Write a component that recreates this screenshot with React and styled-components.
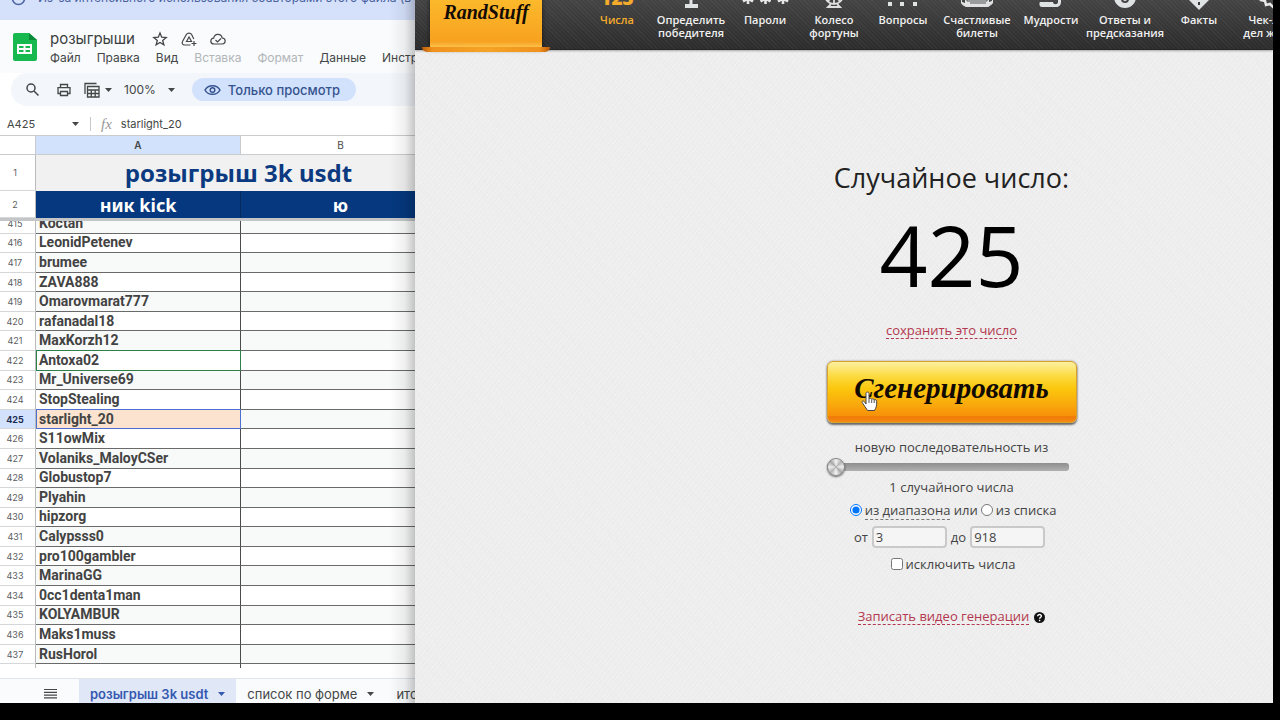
import { useState } from 'react';
import styled, { createGlobalStyle, css } from 'styled-components';

const GlobalStyle = createGlobalStyle`
  * {
    box-sizing: border-box;
  }
  body {
    margin: 0;
    background: #000;
  }
  button, input {
    font: inherit;
    color: inherit;
  }
`;

const Screen = styled.div`
  display: grid;
  grid-template-columns: 415px minmax(0, 1fr);
  height: 100vh;
  padding: 0 7px 17px 0;
  background: #000;
`;

/* ---------- spreadsheet ---------- */

const Sheet = styled.section`
  position: relative;
  display: flex;
  flex-direction: column;
  min-height: 0;
  overflow: hidden;
  background: #fff;
  color: #444746;
  font-family: Inter, 'Open Sans', sans-serif;
  font-size: 12px;
  &::after {
    content: '';
    position: absolute;
    inset: 0 0 0 auto;
    width: 26px;
    background: linear-gradient(to right, rgba(0, 0, 0, 0), rgba(0, 0, 0, 0.06) 60%, rgba(0, 0, 0, 0.22));
    pointer-events: none;
  }
`;

const Banner = styled.div`
  display: flex;
  flex: none;
  align-items: flex-end;
  gap: 12px;
  height: 20px;
  padding: 0 0 14px 11px;
  background: #d5e1fb;
  color: #4a62a0;
  font-size: 12px;
  line-height: 16px;
  white-space: nowrap;
  svg {
    flex: none;
  }
`;

const TitleBar = styled.header`
  display: flex;
  flex: none;
  gap: 13px;
  height: 53px;
  padding: 9px 0 0 13px;
  background: #f9fbfd;
  white-space: nowrap;
`;

const SheetLogo = styled.svg`
  flex: none;
  width: 24px;
  height: 28px;
  margin-top: 4px;
`;

const TitleRow = styled.div`
  display: flex;
  align-items: center;
  gap: 13px;
  height: 20px;
  svg {
    width: 16px;
    height: 16px;
  }
`;

const DocTitle = styled.h1`
  margin: 0 4px 0 0;
  color: #3c3f40;
  font-size: 15px;
  font-weight: 400;
  line-height: 20px;
`;

const MenuRow = styled.nav`
  display: flex;
  gap: 16px;
`;

const MenuButton = styled.button`
  padding: 0;
  border: 0;
  background: none;
  color: #444746;
  line-height: 18px;
  &:disabled {
    color: #b3b6b9;
  }
`;

const Toolbar = styled.div`
  display: flex;
  flex: none;
  align-items: center;
  height: 33px;
  margin-left: 11px;
  padding-left: 14px;
  border-radius: 17px 0 0 17px;
  background: #f3f6fb;
`;

const ToolButton = styled.button`
  display: flex;
  align-items: center;
  gap: ${(p) => p.$gap || 5}px;
  margin-right: ${(p) => p.$after || 0}px;
  padding: 0;
  border: 0;
  background: none;
`;

const ViewOnly = styled.button`
  display: flex;
  align-items: center;
  gap: 7px;
  height: 23px;
  padding: 0 16px 0 12px;
  border: 0;
  border-radius: 12px;
  background: #d3e2fc;
  color: #35538f;
  font-size: 13px;
  font-weight: 500;
`;

const FormulaBar = styled.div`
  display: flex;
  flex: none;
  align-items: center;
  height: 29px;
  padding: 6px 0 0 7px;
  font-size: 11px;
`;

const CellName = styled.button`
  display: flex;
  align-items: center;
  justify-content: space-between;
  width: 72px;
  padding: 0;
  border: 0;
  background: none;
`;

const Fx = styled.span`
  margin: 0 9px 0 11px;
  padding-left: 10px;
  border-left: 1px solid #c7c9cc;
  color: #999;
  font-family: 'Liberation Serif', serif;
  font-size: 15px;
  font-style: italic;
  line-height: 14px;
`;

const Table = styled.table`
  width: 441px;
  table-layout: fixed;
  border-collapse: separate;
  border-spacing: 0;
`;

const FrozenTable = styled(Table)`
  flex: none;
  border-top: 1px solid #c9cccf;
  border-bottom: 3px solid #c4c5c7;
`;

const ColumnHead = styled.th`
  height: 19px;
  padding: 0;
  border-right: 1px solid #c9cccf;
  border-bottom: 1px solid #c9cccf;
  background: ${(p) => (p.$active ? '#d3e2fc' : '#fff')};
  font-size: 10px;
  font-weight: ${(p) => (p.$active ? 600 : 400)};
`;

const RowHead = styled.th`
  padding: 0 5px 0 0;
  border-right: 1px solid #b9bbbd;
  border-bottom: 1px solid #d5d7d9;
  background: ${(p) => (p.$active ? '#d3e2fc' : '#fff')};
  color: ${(p) => (p.$active ? '#1b2c52' : '#5a5d5f')};
  font-size: 9px;
  font-weight: ${(p) => (p.$active ? 700 : 400)};
`;

const SheetHeading = styled.td`
  height: 36px;
  padding: 0;
  background: #f1f1f2;
  color: #0b3a80;
  font-family: 'Noto Sans', sans-serif;
  font-size: 24px;
  font-weight: 700;
  line-height: 34px;
  text-align: center;
`;

const ColumnTitle = styled.td`
  height: 27px;
  padding: 0;
  border-right: 1px solid #062a60;
  background: #05387e;
  color: #fff;
  font-family: 'Noto Sans', sans-serif;
  font-size: 18px;
  font-weight: 700;
  line-height: 26px;
  text-align: center;
`;

const Rows = styled.div`
  flex: 1;
  min-height: 0;
  overflow: hidden;
`;

const RowsTable = styled(Table)`
  height: 470px;
  margin-top: -7px;
`;

const selected = {
  green: css`
    border-color: #2c8048;
    box-shadow: inset 1px 0 #2c8048, 0 -1px #2c8048;
  `,
  blue: css`
    border-color: #4c6fd0;
    background: #fbe3d0;
    box-shadow: inset 1px 0 #4c6fd0, 0 -1px #4c6fd0;
  `,
};

const Cell = styled.td`
  height: 19px;
  padding: 0 0 0 3px;
  border-right: 1px solid #4b4b4b;
  border-bottom: 1px solid #6a6a6a;
  background: ${(p) => (p.$shaded ? '#f8f9f9' : '#fff')};
  color: #434343;
  font-family: Roboto, sans-serif;
  font-size: 14px;
  font-weight: 700;
  line-height: 15px;
  ${(p) => selected[p.$mark]}
`;

const TabBar = styled.footer`
  display: flex;
  flex: none;
  align-items: flex-start;
  height: 25px;
  margin-top: 10px;
  padding-left: 44px;
  border-top: 1px solid #e1e4e8;
  background: #f9fbfd;
  white-space: nowrap;
`;

const MenuIcon = styled.button`
  display: flex;
  margin: 9px 22px 0 0;
  padding: 0;
  border: 0;
  background: none;
`;

const SheetTab = styled.button`
  display: flex;
  align-items: center;
  gap: 10px;
  height: 30px;
  padding: 0 11px;
  border: 0;
  background: ${(p) => (p.$active ? '#e0e8f8' : 'none')};
  color: ${(p) => (p.$active ? '#3558b0' : '#444746')};
  font-size: 13px;
  font-weight: ${(p) => (p.$active ? 600 : 400)};
`;

/* ---------- generator ---------- */

const Site = styled.section`
  display: flex;
  flex-direction: column;
  min-height: 0;
  overflow: hidden;
  background:
    repeating-linear-gradient(45deg, rgba(0, 0, 0, 0.01) 0 1px, transparent 1px 3px),
    repeating-linear-gradient(-52deg, rgba(255, 255, 255, 0.2) 0 1px, transparent 1px 4px),
    #eeeeee;
  color: #444;
  font-family: 'Open Sans', sans-serif;
  font-size: 13px;
`;

const SiteHeader = styled.header`
  display: flex;
  flex: none;
  align-items: flex-end;
  height: 50px;
  padding-left: 15px;
  background:
    repeating-linear-gradient(45deg, rgba(255, 255, 255, 0.04) 0 1px, transparent 1px 3px),
    linear-gradient(#444, #333 70%, #2c2c2c);
  border-bottom: 1px solid #252525;
  box-shadow: 0 1px 2px rgba(0, 0, 0, 0.3);
`;

const Logo = styled.a`
  position: relative;
  flex: none;
  width: 112px;
  height: 50px;
  margin-right: 38px;
  background: linear-gradient(#fcb92b, #f7a220 85%, #fbc04a 96%);
  box-shadow: 0 0 5px rgba(0, 0, 0, 0.6);
  color: #140c04;
  font-family: 'Liberation Serif', serif;
  font-size: 20px;
  font-style: italic;
  font-weight: 700;
  line-height: 26px;
  text-align: center;
  text-decoration: none;
  &::after {
    content: '';
    position: absolute;
    right: -8px;
    bottom: -3px;
    left: -8px;
    height: 5px;
    border-radius: 0 0 7px 7px;
    background: linear-gradient(to right, #b95a0a, #f0921c 8%, #f5a326 50%, #f0921c 92%, #b95a0a);
  }
`;

const SiteNav = styled.nav`
  display: flex;
`;

const NavItem = styled.a`
  display: flex;
  flex: none;
  flex-direction: column;
  align-items: center;
  gap: 5px;
  width: ${(p) => (p.$narrow ? 64 : 74)}px;
  color: ${(p) => (p.$active ? '#f5ac2c' : '#f0f0f0')};
  font-size: 11px;
  font-weight: 600;
  line-height: 13px;
  text-align: center;
  text-decoration: none;
  white-space: pre;
  svg {
    display: block;
    width: 32px;
    height: 24px;
    overflow: visible;
  }
`;

const NavLabel = styled.span`
  height: 36px;
`;

const Digits = styled.b`
  height: 24px;
  font-size: 19px;
  font-weight: 800;
  line-height: 28px;
`;

const Generator = styled.main`
  display: flex;
  flex-direction: column;
  align-items: center;
  padding: 110px 0 0 215px;
`;

const Heading = styled.h2`
  margin: 0;
  color: #222;
  font-size: 27px;
  font-weight: 400;
  line-height: 36px;
`;

const Result = styled.output`
  margin-bottom: 7px;
  color: #000;
  font-size: 84px;
  line-height: 118px;
`;

const DashedLink = styled.a`
  border-bottom: 1px dashed ${(p) => (p.$plain ? '#777' : '#b3384f')};
  color: ${(p) => (p.$plain ? '#444' : '#b3384f')};
  line-height: 15px;
  text-decoration: none;
`;

const ButtonWrap = styled.div`
  position: relative;
  margin: 20px 0 14px;
`;

const GenerateButton = styled.button`
  display: block;
  width: 250px;
  height: 62px;
  padding: 0 0 8px;
  border: 1px solid #d9a12a;
  border-radius: 6px;
  background: linear-gradient(#fdf0a0, #fcd93c 25%, #fbc60c 45%, #f9a40c 75%, #f79008 90%, #ee7a06 91%, #f48a14);
  box-shadow: 0 2px 2px rgba(60, 60, 60, 0.7), 0 0 2px rgba(60, 60, 60, 0.6);
  color: #120a02;
  font-family: 'Liberation Serif', serif;
  font-size: 29px;
  font-style: italic;
  font-weight: 700;
`;

const Pointer = styled.svg`
  position: absolute;
  top: 30px;
  left: 34px;
  width: 17px;
  height: 21px;
`;

const Line = styled.div`
  display: flex;
  align-items: center;
  height: 20px;
  margin-bottom: ${(p) => p.$after || 0}px;
  white-space: pre;
`;

const Slider = styled.input`
  display: block;
  width: 250px;
  height: 20px;
  margin: 0;
  appearance: none;
  background: none;
  &::-webkit-slider-runnable-track {
    height: 8px;
    margin-right: 8px;
    border-radius: 3px;
    background: linear-gradient(#8e8e8e, #b0b0b0);
  }
  &::-webkit-slider-thumb {
    width: 18px;
    height: 18px;
    margin-top: -5px;
    appearance: none;
    border: 1px solid #888;
    border-radius: 50%;
    background: conic-gradient(#f4f4f4, #b5b5b5, #eee, #a8a8a8, #f4f4f4, #b5b5b5, #eee, #a8a8a8, #f4f4f4);
    box-shadow: 0 1px 2px rgba(0, 0, 0, 0.6);
  }
`;

const Tick = styled.input`
  width: 12px;
  height: 12px;
  margin: 0 3px;
`;

const NumberBox = styled.input`
  width: 75px;
  height: 22px;
  margin: 0 4px;
  padding: 0 2px;
  border: 2px solid #c9c9c9;
  border-radius: 4px;
  background: #f5f5f5;
`;

const Help = styled.svg`
  width: 11px;
  height: 11px;
  margin-left: 5px;
`;

const names = [
  'Koctan', 'LeonidPetenev', 'brumee', 'ZAVA888', 'Omarovmarat777', 'rafanadal18',
  'MaxKorzh12', 'Antoxa02', 'Mr_Universe69', 'StopStealing', 'starlight_20', 'S11owMix',
  'Volaniks_MaloyCSer', 'Globustop7', 'Plyahin', 'hipzorg', 'Calypsss0', 'pro100gambler',
  'MarinaGG', '0cc1denta1man', 'KOLYAMBUR', 'Maks1muss', 'RusHorol', '',
];

const marks = { 422: 'green', 425: 'blue' };

const menu = ['Файл', 'Правка', 'Вид', 'Вставка', 'Формат', 'Данные', 'Инструменты'];

const Caret = () => (
  <svg width="7" height="4" viewBox="0 0 7 4">
    <path d="M0 0h7L3.500 4z" fill="currentColor" />
  </svg>
);

const Columns = () => (
  <colgroup>
    <col width="36" />
    <col width="205" />
    <col width="200" />
  </colgroup>
);

const navItems = [
  { label: 'Числа' },
  {
    label: 'Определить\nпобедителя',
    icon: <path d="M9 0h14v7c0 5-3 8-5.500 8.500V20H23v4H10v-4h4.500v-4.500C12 15 9 12 9 7z" />,
  },
  {
    label: 'Пароли',
    icon: (
      <path
        d="M-1 9v11M-6 11.500l10 6M4 11.500l-10 6M16.500 9v11M11.500 11.500l10 6M21.500 11.500l-10 6M34 9v11M29 11.500l10 6M39 11.500l-10 6"
        fill="none"
        stroke="#e8e8e8"
        strokeWidth="2.600"
      />
    ),
  },
  {
    label: 'Колесо\nфортуны',
    narrow: true,
    icon: (
      <g fill="none" stroke="#e0e0e0" strokeWidth="1.800">
        <circle cx="16" cy="11" r="9" />
        <circle cx="16" cy="11" r="3" />
        <path d="M16 2v18M7 11h18M10 5l12 12M22 5L10 17M13 20l-3 3h12l-3-3" />
      </g>
    ),
  },
  {
    label: 'Вопросы',
    icon: (
      <g>
        <path d="M1 4h4l-1 12H2zM13 4h4l-1 12h-2z" />
        <path d="M25 8c1-5 8-5 8 0 0 4-4 3-4 8" fill="none" stroke="#e8e8e8" strokeWidth="3" />
        <path d="M1 18h4v4H1zM13 18h4v4h-4zM26 18h4v4h-4z" />
      </g>
    ),
  },
  {
    label: 'Счастливые\nбилеты',
    icon: (
      <g>
        <path d="M4 0h24v18l3-1V2h1v17l-4 3H3l-3-3V3h1v15l3 1z" />
        <path d="M6 3h20v14H6zM9 19h16" fill="none" stroke="#555" />
        <path d="M1 19l4 3h22l4-3" fill="none" stroke="#e0e0e0" strokeWidth="2" />
      </g>
    ),
  },
  {
    label: 'Мудрости',
    icon: (
      <path d="M9 2h17v16c0 3-2 5-5 5H7c-3 0-3-4-2-5h13c0 3 5 3 5 0V5H9z" />
    ),
  },
  {
    label: 'Ответы и\nпредсказания',
    icon: (
      <g>
        <circle cx="16" cy="13" r="11" />
        <circle cx="16" cy="15" r="4" fill="#444" />
        <circle cx="16" cy="15" r="2" />
      </g>
    ),
  },
  {
    label: 'Факты',
    icon: (
      <g>
        <path d="M16 0l13 13-13 13L3 13z" />
        <path d="M15 6h2v9h-2zM15 18h2v3h-2z" fill="#3a3a3a" />
      </g>
    ),
  },
  {
    label: 'Чек-лист\nдел жизни',
    icon: (
      <path
        d="M16 2l3 3 4-1 1 4 4 1-1 4 2 4-4 1-1 4-4-1-4 2-3-3-4 1-1-4-4-1 1-4"
        fill="none"
        stroke="#e8e8e8"
        strokeWidth="2.500"
      />
    ),
  },
];

function Spreadsheet() {
  return (
    <Sheet>
      <Banner>
        <svg width="15" height="15" viewBox="0 0 15 15" fill="none" stroke="#4a62a0" strokeWidth="1.600">
          <circle cx="7.500" cy="7.500" r="6" />
        </svg>
        <span>Из-за интенсивного использования соавторами этого файла (в</span>
      </Banner>

      <TitleBar>
        <SheetLogo viewBox="0 0 24 28">
          <path d="M2 0h14l8 7v19a2 2 0 0 1-2 2H2a2 2 0 0 1-2-2V2a2 2 0 0 1 2-2z" fill="#17b84e" />
          <path d="M16 0l8 7h-8z" fill="#0b8a38" />
          <path d="M4 11h15v10H4zM6 13v2h4.500v-2zM12.500 13v2H17v-2zM6 17v2h4.500v-2zM12.500 17v2H17v-2z" fill="#fff" fillRule="evenodd" />
        </SheetLogo>
        <div>
          <TitleRow>
            <DocTitle>розыгрыши</DocTitle>
            <svg viewBox="0 0 16 16" fill="none" stroke="#444746" strokeWidth="1.300">
              <path d="M8 2l1.700 4.200 4.500.3-3.500 2.900 1.200 4.400L8 11.400l-3.900 2.400 1.200-4.400L1.800 6.500l4.500-.3z" />
            </svg>
            <svg viewBox="0 0 16 16" fill="none" stroke="#444746" strokeWidth="1.200">
              <path d="M9.500 14H3.500C1.500 14 .6 12 1.500 10.500L5.500 3.300c1-1.700 4-1.700 5 0L12.800 8M5.500 10.500L8 6l2.500 4.500zM13 10v5M10.500 12.500h5" />
            </svg>
            <svg viewBox="0 0 16 16" fill="none" stroke="#444746" strokeWidth="1.200">
              <path d="M4 13C-.2 13-.2 7.300 3.700 7.200 4.500 2.500 11 2 12.200 7c4 .3 4 6 0 6zM5.500 9l2 2 3.500-3.500" />
            </svg>
          </TitleRow>
          <MenuRow>
            {menu.map((item) => (
              <MenuButton key={item} disabled={item === 'Вставка' || item === 'Формат'}>
                {item}
              </MenuButton>
            ))}
          </MenuRow>
        </div>
      </TitleBar>

      <Toolbar>
        <ToolButton $after={16} aria-label="Поиск">
          <svg width="15" height="15" viewBox="0 0 15 15" fill="none" stroke="#444746" strokeWidth="1.500">
            <circle cx="6" cy="6" r="4" />
            <path d="M9 9l4.500 4.500" />
          </svg>
        </ToolButton>
        <ToolButton $after={12} aria-label="Печать">
          <svg width="16" height="16" viewBox="0 0 16 16" fill="none" stroke="#444746" strokeWidth="1.300">
            <path d="M4.500 5V2.500h7V5M4.500 11.500H2V5.700h12v5.800h-2.500M4.500 9.500h7v4h-7z" />
          </svg>
        </ToolButton>
        <ToolButton $after={12} aria-label="Фильтры">
          <svg width="16" height="16" viewBox="0 0 16 16" fill="none" stroke="#444746" strokeWidth="1.300">
            <path d="M1 12V1.500h11.500M3.500 4.500H15V15H3.500zM3.500 8H15M7.300 8v7M11.200 8v7M3.500 11.500H15" />
          </svg>
          <Caret />
        </ToolButton>
        <ToolButton $after={17} $gap={12}>
          100%
          <Caret />
        </ToolButton>
        <ViewOnly>
          <svg width="17" height="12" viewBox="0 0 17 12" fill="none" stroke="#35538f" strokeWidth="1.500">
            <path d="M1 6C4 .2 13 .2 16 6 13 11.800 4 11.800 1 6z" />
            <circle cx="8.500" cy="6" r="2.300" />
          </svg>
          Только просмотр
        </ViewOnly>
      </Toolbar>

      <FormulaBar>
        <CellName>
          A425
          <Caret />
        </CellName>
        <Fx>fx</Fx>
        <span>starlight_20</span>
      </FormulaBar>

      <FrozenTable>
        <Columns />
        <thead>
          <tr>
            <ColumnHead />
            <ColumnHead $active>A</ColumnHead>
            <ColumnHead>B</ColumnHead>
          </tr>
        </thead>
        <tbody>
          <tr>
            <RowHead>1</RowHead>
            <SheetHeading colSpan={2}>розыгрыш 3k usdt</SheetHeading>
          </tr>
          <tr>
            <RowHead>2</RowHead>
            <ColumnTitle>ник kick</ColumnTitle>
            <ColumnTitle>ю</ColumnTitle>
          </tr>
        </tbody>
      </FrozenTable>

      <Rows>
        <RowsTable>
          <Columns />
          <tbody>
            {names.map((name, i) => {
              const row = 415 + i;
              return (
                <tr key={row}>
                  <RowHead $active={row === 425}>{name && row}</RowHead>
                  <Cell $shaded={row % 2 === 1} $mark={marks[row]}>{name}</Cell>
                  <Cell $shaded={row % 2 === 1} />
                </tr>
              );
            })}
          </tbody>
        </RowsTable>
      </Rows>

      <TabBar>
        <MenuIcon aria-label="Все листы">
          <svg width="13" height="11" viewBox="0 0 13 11" stroke="#444746" strokeWidth="1.200">
            <path d="M0 1.500h13M0 4.300h13M0 7.100h13M0 9.900h13" />
          </svg>
        </MenuIcon>
        <SheetTab $active>
          розыгрыш 3k usdt
          <Caret />
        </SheetTab>
        <SheetTab>
          список по форме
          <Caret />
        </SheetTab>
        <SheetTab>итоги</SheetTab>
      </TabBar>
    </Sheet>
  );
}

function RandomNumber() {
  const [source, setSource] = useState('range');
  const [from, setFrom] = useState('3');
  const [to, setTo] = useState('918');

  return (
    <Site>
      <SiteHeader>
        <Logo href="#">RandStuff</Logo>
        <SiteNav>
          {navItems.map((item, i) => (
            <NavItem key={item.label} href="#" $active={i === 0} $narrow={item.narrow}>
              {item.icon ? (
                <svg viewBox="0 0 32 24" fill="#e0e3e4">{item.icon}</svg>
              ) : (
                <Digits>123</Digits>
              )}
              <NavLabel>{item.label}</NavLabel>
            </NavItem>
          ))}
        </SiteNav>
      </SiteHeader>

      <Generator>
        <Heading>Случайное число:</Heading>
        <Result>425</Result>
        <Line>
          <DashedLink href="#">сохранить это число</DashedLink>
        </Line>
        <ButtonWrap>
          <GenerateButton>Сгенерировать</GenerateButton>
          <Pointer viewBox="0 0 17 21">
            <path
              d="M5 13V2.500C5 .5 8 .5 8 2.500V8c.3-1 2.500-1 2.700.3.500-.8 2.300-.6 2.500.7.600-.7 2.500-.4 2.500 1.300 0 5-.4 6-2.200 9.200H6.500C5 16.500 2.500 14 1.200 11.500.6 10 2.500 9.300 3.500 10.800z"
              fill="#fff"
              stroke="#444"
            />
            <path d="M8 8v4M10.700 8.500V12M13.200 9v3" stroke="#555" />
          </Pointer>
        </ButtonWrap>
        <Line>
          <label htmlFor="count">новую последовательность из</label>
        </Line>
        <Slider id="count" type="range" min="1" max="100" defaultValue="1" />
        <Line $after={3}>1 случайного числа</Line>
        <Line $after={7}>
          <Tick id="range" type="radio" name="source" checked={source === 'range'} onChange={() => setSource('range')} />
          <label htmlFor="range">
            <DashedLink as="span" $plain>из диапазона</DashedLink>
          </label>
          {' или'}
          <Tick id="list" type="radio" name="source" checked={source === 'list'} onChange={() => setSource('list')} />
          <label htmlFor="list">из списка</label>
        </Line>
        <Line $after={7}>
          <label htmlFor="from">от</label>
          <NumberBox id="from" value={from} onChange={(e) => setFrom(e.target.value)} />
          <label htmlFor="to">до</label>
          <NumberBox id="to" value={to} onChange={(e) => setTo(e.target.value)} />
        </Line>
        <Line $after={33}>
          <Tick id="exclude" type="checkbox" />
          <label htmlFor="exclude">исключить числа</label>
        </Line>
        <Line>
          <DashedLink href="#">Записать видео генерации</DashedLink>
          <Help viewBox="0 0 11 11">
            <circle cx="5.500" cy="5.500" r="5.500" fill="#111" />
            <path d="M3.600 4.300c0-2.400 4-2.300 3.800 0C7.300 5.500 5.600 5.400 5.600 6.800M5.600 7.800v1.400" fill="none" stroke="#fff" strokeWidth="1.400" />
          </Help>
        </Line>
      </Generator>
    </Site>
  );
}

export default function App() {
  return (
    <>
      <GlobalStyle />
      <Screen>
        <Spreadsheet />
        <RandomNumber />
      </Screen>
    </>
  );
}
